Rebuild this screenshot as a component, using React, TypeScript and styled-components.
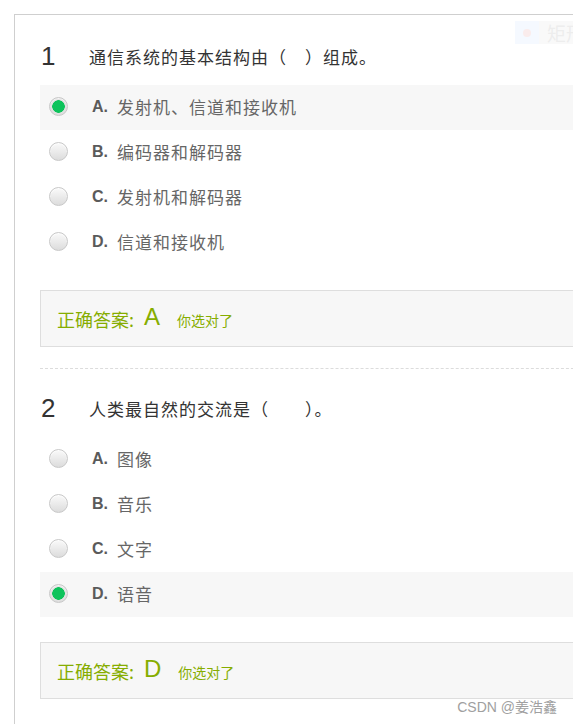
import React from "react";
import styled, { createGlobalStyle } from "styled-components";

interface IQuestion {
  no: number;
  title: string;
  options: string[];
  picked: number;
  answer: string;
}

const questions: IQuestion[] = [
  {
    no: 1,
    title: "通信系统的基本结构由（　）组成。",
    options: ["发射机、信道和接收机", "编码器和解码器", "发射机和解码器", "信道和接收机"],
    picked: 0,
    answer: "A",
  },
  {
    no: 2,
    title: "人类最自然的交流是（　　）。",
    options: ["图像", "音乐", "文字", "语音"],
    picked: 3,
    answer: "D",
  },
];

const letters = ["A", "B", "C", "D"];

const App = () => {
  return (
    <>
      <GlobalStyle />
      <Page>
        <Panel>
          {questions.map((q, i) => (
            <Question key={q.no} last={i === questions.length - 1}>
              <Header>
                <Num>{q.no}</Num>
                <Title>{q.title}</Title>
              </Header>
              {q.options.map((opt, j) => (
                <Option key={j} active={j === q.picked}>
                  <Radio checked={j === q.picked} />
                  <Letter>{letters[j]}.</Letter>
                  <OptText>{opt}</OptText>
                </Option>
              ))}
              <AnswerBox>
                <AnswerLabel>正确答案:</AnswerLabel>
                <AnswerKey>{q.answer}</AnswerKey>
                <AnswerNote>你选对了</AnswerNote>
              </AnswerBox>
            </Question>
          ))}
        </Panel>
        <Ghost>
          <GhostIcon>
            <GhostDot />
          </GhostIcon>
          <GhostText>矩形选框</GhostText>
        </Ghost>
        <Watermark>CSDN @姜浩鑫</Watermark>
      </Page>
    </>
  );
};

export default App;

//styled-components

const GlobalStyle = createGlobalStyle`
  html, body {
    margin: 0;
    padding: 0;
    background: #fff;
    overflow: hidden;
  }
  body {
    font-family: "Liberation Sans", Arial, "Noto Sans CJK SC", sans-serif;
  }
`;

const Page = styled.div`
  position: relative;
  height: 724px;
  padding: 14px 0 0 14px;
  box-sizing: border-box;
  overflow: hidden;
`;

const Panel = styled.div`
  width: 600px;
  min-height: 720px;
  border-top: 1px solid #cfcfcf;
  border-left: 1px solid #cfcfcf;
  padding: 2px 0 0 25px;
  box-sizing: border-box;
`;

const Question = styled.div<{ last?: boolean }>`
  padding-top: 18px;
  padding-bottom: ${(p) => (p.last ? "0" : "21px")};
  border-bottom: ${(p) => (p.last ? "none" : "1px dashed #dcdcdc")};
`;

const Header = styled.div`
  display: flex;
  align-items: center;
  height: 42px;
  margin-bottom: 8px;
`;

const Num = styled.span`
  width: 48px;
  font-size: 26px;
  color: #333;
  padding-left: 1px;
`;

const Title = styled.span`
  font-family: "Noto Sans CJK SC", sans-serif;
  font-size: 17px;
  letter-spacing: 1px;
  color: #333;
`;

const Option = styled.div<{ active?: boolean }>`
  display: flex;
  align-items: center;
  height: 45px;
  padding: 0 0 2px 9px;
  box-sizing: border-box;
  background: ${(p) => (p.active ? "#f7f7f7" : "transparent")};
`;

const Radio = styled.span<{ checked?: boolean }>`
  width: 19px;
  height: 19px;
  border-radius: 50%;
  box-sizing: border-box;
  border: 1px solid #c8c8c8;
  background: ${(p) =>
    p.checked
      ? "radial-gradient(circle, #0dc35b 0 6px, #e2e2e2 6.5px, #d6d6d6 100%)"
      : "linear-gradient(#fafafa, #dcdcdc)"};
  box-shadow: inset 0 1px 1px rgba(255, 255, 255, 0.8);
  flex-shrink: 0;
`;

const Letter = styled.span`
  margin-left: 24px;
  width: 25px;
  font-size: 16px;
  font-weight: bold;
  color: #5a5a5a;
`;

const OptText = styled.span`
  font-family: "Noto Sans CJK SC", sans-serif;
  font-size: 17px;
  letter-spacing: 1px;
  color: #666;
`;

const AnswerBox = styled.div`
  display: flex;
  align-items: center;
  height: 57px;
  margin-top: 25px;
  padding-left: 16px;
  box-sizing: border-box;
  border: 1px solid #dedede;
  background: #f7f7f7;
  color: #86ad00;
`;

const AnswerLabel = styled.span`
  font-family: "Noto Sans CJK SC", sans-serif;
  font-size: 18px;
  margin-top: 1px;
`;

const AnswerKey = styled.span`
  font-size: 24px;
  margin-left: 10px;
  margin-top: -4px;
`;

const AnswerNote = styled.span`
  font-family: "Noto Sans CJK SC", sans-serif;
  font-size: 14px;
  margin-left: 17px;
  margin-top: 2px;
`;

const Ghost = styled.div`
  position: absolute;
  top: 21px;
  left: 515px;
  display: flex;
  align-items: center;
  white-space: nowrap;
  opacity: 0.45;
`;

const GhostIcon = styled.span`
  display: flex;
  align-items: center;
  justify-content: center;
  width: 24px;
  height: 23px;
  background: #eaf3ff;
`;

const GhostDot = styled.span`
  width: 8px;
  height: 8px;
  border-radius: 50%;
  background: #f6d6d6;
`;

const GhostText = styled.span`
  display: flex;
  align-items: center;
  height: 23px;
  padding: 0 8px;
  font-family: "Noto Sans CJK SC", sans-serif;
  font-size: 19px;
  color: #d8d8d8;
  background: #f3f3f3;
`;

const Watermark = styled.div`
  position: absolute;
  right: 16px;
  bottom: 8px;
  font-family: "Liberation Sans", "Noto Sans CJK SC", sans-serif;
  font-size: 14px;
  color: #a0a0a0;
  text-shadow: 0 0 2px #fff;
`;
